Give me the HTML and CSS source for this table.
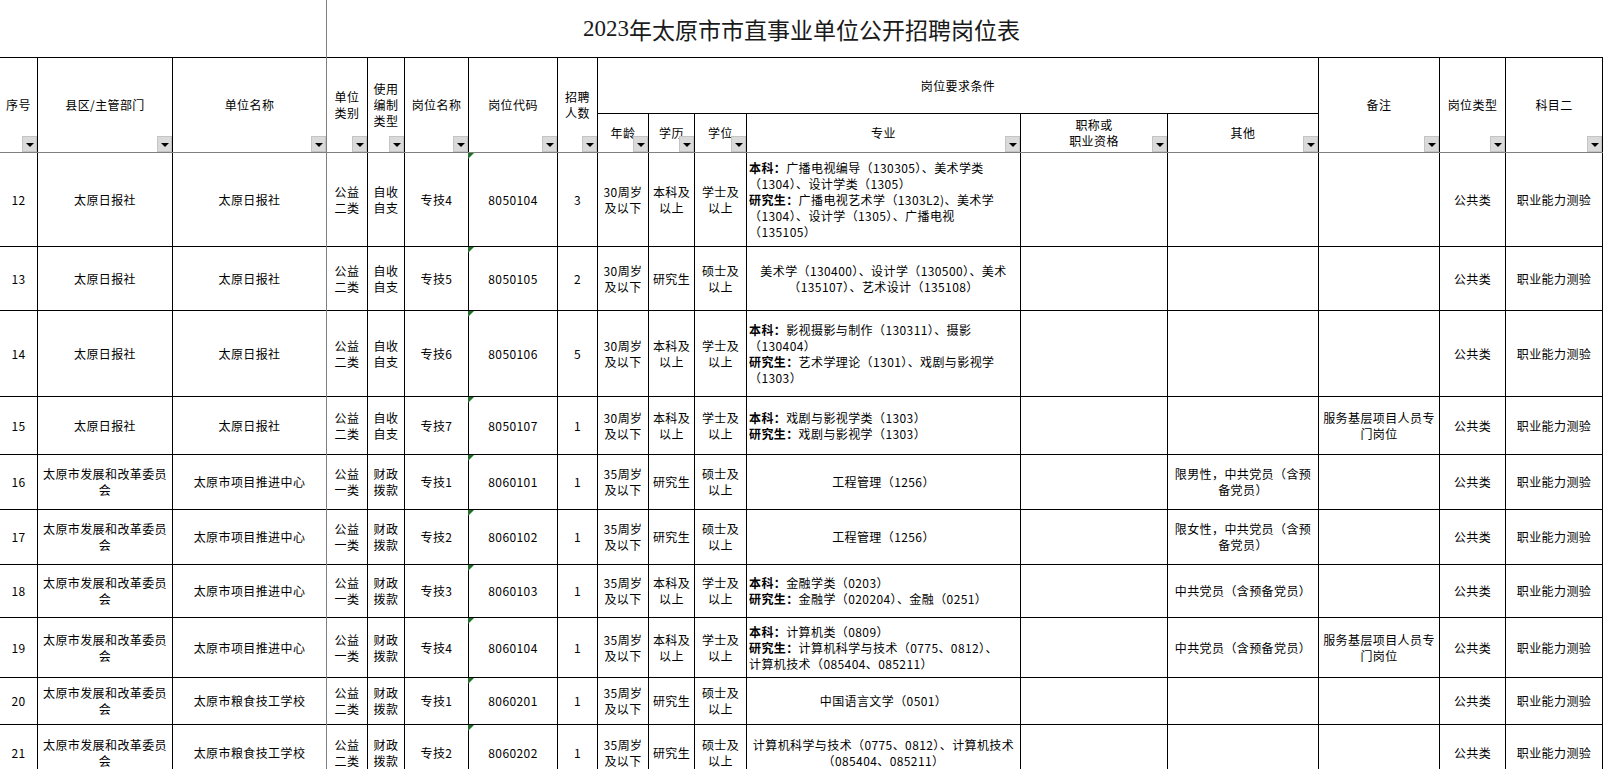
FILE: index.html
```html
<!DOCTYPE html>
<html lang="zh-CN">
<head>
<meta charset="utf-8">
<title>2023年太原市市直事业单位公开招聘岗位表</title>
<link rel="stylesheet" href="styles.css">
</head>
<body>
<div class="sheet">
  <div class="title"><span class="num">2023</span>年太原市市直事业单位公开招聘岗位表</div>
  <table class="grid">
    <colgroup>
      <col class="c1"><col class="c2"><col class="c3"><col class="c4"><col class="c5"><col class="c6"><col class="c7"><col class="c8"><col class="c9"><col class="c10"><col class="c11"><col class="c12"><col class="c13"><col class="c14"><col class="c15"><col class="c16"><col class="c17">
    </colgroup>
    <thead>
      <tr class="h1">
        <th rowspan="2">序号<span class="dd"></span></th>
        <th rowspan="2">县区/主管部门<span class="dd"></span></th>
        <th rowspan="2">单位名称<span class="dd"></span></th>
        <th rowspan="2">单位<br>类别<span class="dd"></span></th>
        <th rowspan="2">使用<br>编制<br>类型<span class="dd"></span></th>
        <th rowspan="2">岗位名称<span class="dd"></span></th>
        <th rowspan="2">岗位代码<span class="dd"></span></th>
        <th rowspan="2">招聘<br>人数<span class="dd"></span></th>
        <th colspan="6">岗位要求条件</th>
        <th rowspan="2">备注<span class="dd"></span></th>
        <th rowspan="2">岗位类型<span class="dd"></span></th>
        <th rowspan="2">科目二<span class="dd"></span></th>
      </tr>
      <tr class="h2">
        <th>年龄<span class="dd"></span></th>
        <th>学历<span class="dd"></span></th>
        <th>学位<span class="dd"></span></th>
        <th>专业<span class="dd"></span></th>
        <th>职称或<br>职业资格<span class="dd"></span></th>
        <th>其他<span class="dd"></span></th>
      </tr>
    </thead>
    <tbody>
      <tr class="r12">
        <td>12</td><td>太原日报社</td><td>太原日报社</td><td>公益<br>二类</td><td>自收<br>自支</td><td>专技4</td><td class="code">8050104</td><td>3</td><td>30周岁<br>及以下</td><td>本科及<br>以上</td><td>学士及<br>以上</td>
        <td class="left"><b>本科：</b>广播电视编导（130305）、美术学类<br>（1304）、设计学类（1305）<br><b>研究生：</b>广播电视艺术学（1303L2)、美术学<br>（1304）、设计学（1305）、广播电视<br>（135105）</td>
        <td></td><td></td><td></td><td>公共类</td><td>职业能力测验</td>
      </tr>
      <tr class="r13">
        <td>13</td><td>太原日报社</td><td>太原日报社</td><td>公益<br>二类</td><td>自收<br>自支</td><td>专技5</td><td class="code">8050105</td><td>2</td><td>30周岁<br>及以下</td><td>研究生</td><td>硕士及<br>以上</td>
        <td>美术学（130400）、设计学（130500）、美术<br>（135107）、艺术设计（135108）</td>
        <td></td><td></td><td></td><td>公共类</td><td>职业能力测验</td>
      </tr>
      <tr class="r14">
        <td>14</td><td>太原日报社</td><td>太原日报社</td><td>公益<br>二类</td><td>自收<br>自支</td><td>专技6</td><td class="code">8050106</td><td>5</td><td>30周岁<br>及以下</td><td>本科及<br>以上</td><td>学士及<br>以上</td>
        <td class="left"><b>本科：</b>影视摄影与制作（130311）、摄影<br>（130404）<br><b>研究生：</b>艺术学理论（1301）、戏剧与影视学<br>（1303）</td>
        <td></td><td></td><td></td><td>公共类</td><td>职业能力测验</td>
      </tr>
      <tr class="r15">
        <td>15</td><td>太原日报社</td><td>太原日报社</td><td>公益<br>二类</td><td>自收<br>自支</td><td>专技7</td><td class="code">8050107</td><td>1</td><td>30周岁<br>及以下</td><td>本科及<br>以上</td><td>学士及<br>以上</td>
        <td class="left"><b>本科：</b>戏剧与影视学类（1303）<br><b>研究生：</b>戏剧与影视学（1303）</td>
        <td></td><td></td><td>服务基层项目人员专<br>门岗位</td><td>公共类</td><td>职业能力测验</td>
      </tr>
      <tr class="r16">
        <td>16</td><td>太原市发展和改革委员<br>会</td><td>太原市项目推进中心</td><td>公益<br>一类</td><td>财政<br>拨款</td><td>专技1</td><td class="code">8060101</td><td>1</td><td>35周岁<br>及以下</td><td>研究生</td><td>硕士及<br>以上</td>
        <td>工程管理（1256）</td>
        <td></td><td>限男性，中共党员（含预<br>备党员）</td><td></td><td>公共类</td><td>职业能力测验</td>
      </tr>
      <tr class="r17">
        <td>17</td><td>太原市发展和改革委员<br>会</td><td>太原市项目推进中心</td><td>公益<br>一类</td><td>财政<br>拨款</td><td>专技2</td><td class="code">8060102</td><td>1</td><td>35周岁<br>及以下</td><td>研究生</td><td>硕士及<br>以上</td>
        <td>工程管理（1256）</td>
        <td></td><td>限女性，中共党员（含预<br>备党员）</td><td></td><td>公共类</td><td>职业能力测验</td>
      </tr>
      <tr class="r18">
        <td>18</td><td>太原市发展和改革委员<br>会</td><td>太原市项目推进中心</td><td>公益<br>一类</td><td>财政<br>拨款</td><td>专技3</td><td class="code">8060103</td><td>1</td><td>35周岁<br>及以下</td><td>本科及<br>以上</td><td>学士及<br>以上</td>
        <td class="left"><b>本科：</b>金融学类（0203）<br><b>研究生：</b>金融学（020204）、金融（0251）</td>
        <td></td><td>中共党员（含预备党员）</td><td></td><td>公共类</td><td>职业能力测验</td>
      </tr>
      <tr class="r19">
        <td>19</td><td>太原市发展和改革委员<br>会</td><td>太原市项目推进中心</td><td>公益<br>一类</td><td>财政<br>拨款</td><td>专技4</td><td class="code">8060104</td><td>1</td><td>35周岁<br>及以下</td><td>本科及<br>以上</td><td>学士及<br>以上</td>
        <td class="left"><b>本科：</b>计算机类（0809）<br><b>研究生：</b>计算机科学与技术（0775、0812）、<br>计算机技术（085404、085211）</td>
        <td></td><td>中共党员（含预备党员）</td><td>服务基层项目人员专<br>门岗位</td><td>公共类</td><td>职业能力测验</td>
      </tr>
      <tr class="r20">
        <td>20</td><td>太原市发展和改革委员<br>会</td><td>太原市粮食技工学校</td><td>公益<br>二类</td><td>财政<br>拨款</td><td>专技1</td><td class="code">8060201</td><td>1</td><td>35周岁<br>及以下</td><td>研究生</td><td>硕士及<br>以上</td>
        <td>中国语言文学（0501）</td>
        <td></td><td></td><td></td><td>公共类</td><td>职业能力测验</td>
      </tr>
      <tr class="r21">
        <td>21</td><td>太原市发展和改革委员<br>会</td><td>太原市粮食技工学校</td><td>公益<br>二类</td><td>财政<br>拨款</td><td>专技2</td><td class="code">8060202</td><td>1</td><td>35周岁<br>及以下</td><td>研究生</td><td>硕士及<br>以上</td>
        <td>计算机科学与技术（0775、0812）、计算机技术<br>（085404、085211）</td>
        <td></td><td></td><td></td><td>公共类</td><td>职业能力测验</td>
      </tr>
    </tbody>
  </table>
  <div class="freeze-v"></div>
  <div class="freeze-h"></div>
</div>
</body>
</html>
```

FILE: styles.css
```css
html, body {
  margin: 0;
  padding: 0;
  background: #fff;
  overflow: hidden;
}
body {
  width: 1619px;
  height: 769px;
  font-family: "Noto Sans CJK SC", "Noto Sans", sans-serif;
  color: #000;
}
.sheet {
  position: relative;
  width: 1619px;
}
.title {
  width: 1603px;
  height: 57px;
  display: flex;
  align-items: center;
  justify-content: center;
  font-size: 23px;
  font-family: "Noto Sans CJK SC", sans-serif;
  color: #1a1a1a;
}
.title .num {
  font-family: "Liberation Serif", serif;
}
.grid {
  width: 1603px;
  table-layout: fixed;
  border-collapse: separate;
  border-spacing: 0;
  font-size: 12px;
  letter-spacing: 0.4px;
  line-height: 16px;
}
.c1 { width: 38px; }
.c2 { width: 135px; }
.c3 { width: 154px; }
.c4 { width: 41px; }
.c5 { width: 37px; }
.c6 { width: 64px; }
.c7 { width: 89px; }
.c8 { width: 40px; }
.c9 { width: 51px; }
.c10 { width: 46px; }
.c11 { width: 52px; }
.c12 { width: 274px; }
.c13 { width: 147px; }
.c14 { width: 151px; }
.c15 { width: 121px; }
.c16 { width: 66px; }
.c17 { width: 97px; }

.grid th,
.grid td {
  border-right: 1px solid #000;
  border-bottom: 1px solid #000;
  padding: 0 2px;
  text-align: center;
  vertical-align: middle;
  white-space: nowrap;
  font-weight: normal;
  position: relative;
  overflow: visible;
}
.grid .h1 th {
  border-top: 1px solid #000;
}
.grid td.left {
  text-align: left;
}
.grid b {
  font-weight: 700;
}
.h1 { height: 57px; }
.h2 { height: 39px; }
.r12 { height: 94px; }
.r13 { height: 64px; }
.r14 { height: 86px; }
.r15 { height: 58px; }
.r16 { height: 55px; }
.r17 { height: 55px; }
.r18 { height: 53px; }
.r19 { height: 60px; }
.r20 { height: 47px; }
.r21 { height: 56px; }

.dd {
  position: absolute;
  right: 0;
  bottom: 0;
  width: 15px;
  height: 16px;
  box-sizing: border-box;
  background: #dadada;
  border: 1px solid #c4c4c4;
}
.dd::after {
  content: "";
  position: absolute;
  left: 3px;
  top: 6px;
  width: 0;
  height: 0;
  border-left: 4px solid transparent;
  border-right: 4px solid transparent;
  border-top: 4px solid #000;
}
.code::before {
  content: "";
  position: absolute;
  left: -1px;
  top: 0;
  width: 0;
  height: 0;
  border-top: 6px solid #1f6f2a;
  border-right: 6px solid transparent;
}
.freeze-v {
  position: absolute;
  left: 326px;
  top: 0;
  width: 1px;
  height: 800px;
  background: #7f7f7f;
}
.freeze-h {
  position: absolute;
  left: 0;
  top: 152px;
  width: 1603px;
  height: 1px;
  background: #7f7f7f;
}
```
